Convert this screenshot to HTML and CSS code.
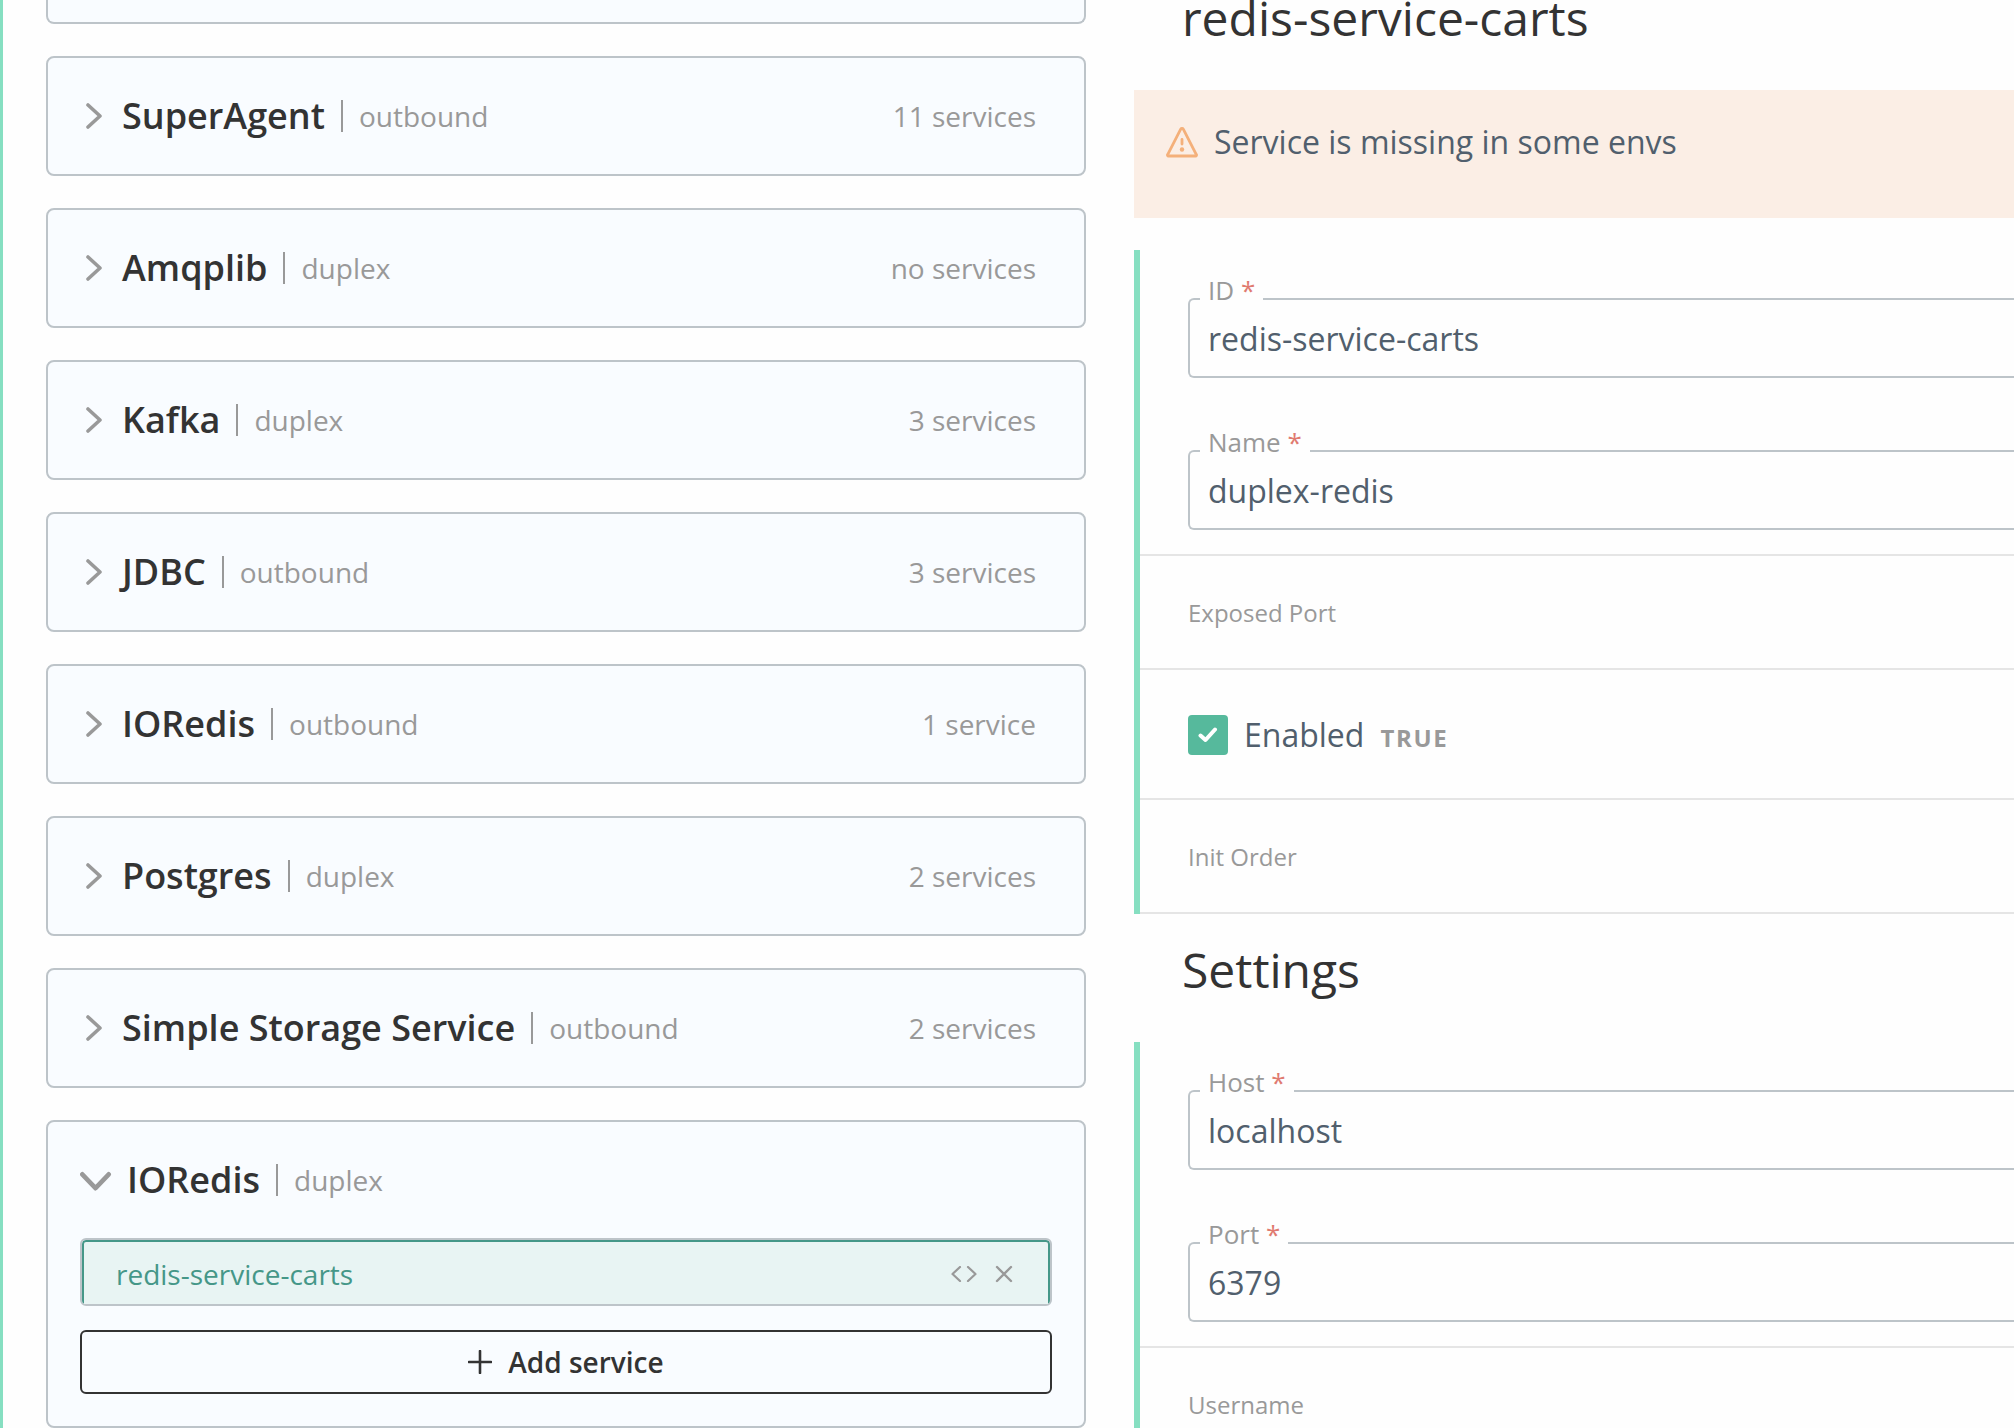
FILE: index.html
```html
<!DOCTYPE html>
<html lang="en">
<head>
<meta charset="utf-8">
<title>Services</title>
<link rel="stylesheet" href="styles.css">
</head>
<body>
<main class="page">
  <section class="list">
    <article class="card card-cut"></article>
    <article class="card"><svg class="chev" viewBox="0 0 16 26"><path d="M2 2l12 11L2 24"/></svg><h3>SuperAgent</h3><span class="kind">outbound</span><span class="count">11 services</span></article>
    <article class="card"><svg class="chev" viewBox="0 0 16 26"><path d="M2 2l12 11L2 24"/></svg><h3>Amqplib</h3><span class="kind">duplex</span><span class="count">no services</span></article>
    <article class="card"><svg class="chev" viewBox="0 0 16 26"><path d="M2 2l12 11L2 24"/></svg><h3>Kafka</h3><span class="kind">duplex</span><span class="count">3 services</span></article>
    <article class="card"><svg class="chev" viewBox="0 0 16 26"><path d="M2 2l12 11L2 24"/></svg><h3>JDBC</h3><span class="kind">outbound</span><span class="count">3 services</span></article>
    <article class="card"><svg class="chev" viewBox="0 0 16 26"><path d="M2 2l12 11L2 24"/></svg><h3>IORedis</h3><span class="kind">outbound</span><span class="count">1 service</span></article>
    <article class="card"><svg class="chev" viewBox="0 0 16 26"><path d="M2 2l12 11L2 24"/></svg><h3>Postgres</h3><span class="kind">duplex</span><span class="count">2 services</span></article>
    <article class="card"><svg class="chev" viewBox="0 0 16 26"><path d="M2 2l12 11L2 24"/></svg><h3>Simple Storage Service</h3><span class="kind">outbound</span><span class="count">2 services</span></article>
    <article class="card card-open">
      <header class="card-head"><svg class="chev-down" viewBox="0 0 32 22"><path d="M2.300 5.300L15.500 19.200 28.700 5.300"/></svg><h3>IORedis</h3><span class="kind">duplex</span></header>
      <div class="service">
        <div class="service-row">
          <span class="service-name">redis-service-carts</span>
          <svg class="code" viewBox="0 0 26 16"><path d="M9 1L1.500 8 9 15M17 1l7.500 7L17 15"/></svg>
          <svg class="close" viewBox="0 0 18 18"><path d="M2 2l14 14M16 2L2 16"/></svg>
        </div>
      </div>
      <button class="add"><svg class="plus" viewBox="0 0 24 24"><path d="M12 1v22M1 12h22"/></svg>Add service</button>
    </article>
  </section>
  <section class="detail">
    <h1>redis-service-carts</h1>
    <div class="alert"><svg class="warn" viewBox="0 0 32 32"><path d="M14.700 3.200a1.500 1.500 0 0 1 2.600 0L30.200 28.300a1 1 0 0 1-.9 1.700H2.700a1 1 0 0 1-.9-1.700z"/><path d="M16 13.500v4.500"/><circle cx="16" cy="23.500" r="2.200"/></svg><span>Service is missing in some envs</span></div>
    <div class="group">
      <div class="fields">
        <div class="field"><label>ID <i>*</i></label><span>redis-service-carts</span></div>
        <div class="field"><label>Name <i>*</i></label><span>duplex-redis</span></div>
      </div>
      <div class="row">Exposed Port</div>
      <div class="row row-check"><span class="check"><svg viewBox="0 0 20 16"><path d="M2.500 8.500l5 4.500L17 2.500"/></svg></span><span class="check-label">Enabled</span><b>TRUE</b></div>
      <div class="row">Init Order</div>
    </div>
    <h2>Settings</h2>
    <div class="group">
      <div class="fields">
        <div class="field"><label>Host <i>*</i></label><span>localhost</span></div>
        <div class="field"><label>Port <i>*</i></label><span>6379</span></div>
      </div>
      <div class="row">Username</div>
    </div>
  </section>
</main>
</body>
</html>
```
FILE: styles.css
```css
* { box-sizing: border-box; }
body { margin: 0; background: #fefefe; color: #333; font-family: "Open Sans", sans-serif; }
h1, h2, h3 { margin: 0; }
svg { display: block; flex: none; fill: none; stroke: #999; stroke-linecap: round; stroke-linejoin: round; }
.page { display: flex; height: 1428px; overflow: hidden; border-left: 3px solid #86dfc1; }

/* Plugin list */
.list { display: flex; flex-direction: column; gap: 32px; width: 1040px; margin-left: 43px; flex: none; }
.card { display: flex; align-items: center; flex: none; height: 120px; padding: 0 48px 0 38px; border: 2px solid #bdc4c9; border-radius: 8px; background: #f9fcff; }
.card-cut { height: 24px; border-top: 0; border-radius: 0 0 8px 8px; }
.chev { width: 16px; height: 26px; stroke-width: 3.6; margin-right: 20px; }
.card h3 { font-size: 36px; font-weight: 600; line-height: 48px; white-space: nowrap; }
.kind { display: flex; align-items: center; height: 32px; margin-left: 16px; padding-left: 16px; border-left: 2px solid #999; color: #999; font-size: 28px; line-height: 32px; }
.count { margin-left: auto; color: #999; font-size: 28px; line-height: 32px; }
.card-open { display: block; height: 308px; padding: 0 32px; }
.card-head { display: flex; align-items: center; height: 116px; }
.chev-down { width: 32px; height: 22px; stroke-width: 4.6; margin-right: 15px; }
.service { height: 68px; border: 2px solid #bdc4c9; border-radius: 6px; overflow: hidden; }
.service-row { display: flex; align-items: center; height: 68px; padding: 0 35px 0 32px; border: 2px solid #459788; border-radius: 4px; background: #e8f4f3; }
.service-name { flex: 1; color: #459788; font-size: 28px; line-height: 38px; }
.code { width: 26px; height: 16px; stroke-width: 2.2; margin-right: 18px; }
.close { width: 18px; height: 18px; stroke-width: 2.4; }
.add { display: flex; align-items: center; justify-content: center; width: 100%; height: 64px; margin-top: 24px; padding: 0; border: 2px solid #333; border-radius: 6px; background: transparent; color: #333; font: 600 28px/38px "Open Sans", sans-serif; }
.plus { width: 24px; height: 24px; margin-right: 16px; stroke: #333; stroke-width: 2.6; }

/* Service form */
.detail { flex: 1; min-width: 0; margin-left: 48px; }
h1, h2 { padding-left: 48px; font-size: 48px; font-weight: 400; line-height: 65px; white-space: nowrap; }
h1 { margin-top: -15px; }
h2 { margin: 23px 0 40px; }
.alert { display: flex; height: 128px; margin: 40px 0 32px; padding: 32px; background: #fbeee5; color: #515f6d; font-size: 32px; line-height: 40px; }
.warn { width: 32px; height: 32px; margin: 4px 16px 0 0; stroke: #f4b07a; stroke-width: 2.8; }
.warn circle { fill: #f4b07a; stroke: none; }
.group { border-left: 6px solid #86dfc1; }
.fields { display: flex; flex-direction: column; gap: 72px; padding: 48px 0 24px 48px; }
.field { position: relative; height: 80px; padding: 17px 18px; border: 2px solid #bdc4c9; border-right: 0; border-radius: 6px 0 0 6px; color: #515f6d; font-size: 32px; line-height: 44px; }
.field span { display: block; }
.field label { position: absolute; left: 10px; top: -27px; padding: 0 8px; background: #fefefe; color: #999; font-size: 26px; line-height: 34px; }
.field i { color: #e07a70; font-style: normal; }
.row { display: flex; align-items: center; height: 114px; padding: 2px 0 0 48px; border-top: 2px solid #e5e5e5; color: #999; font-size: 24px; line-height: 32px; }
.row-check { height: 130px; }
.row:last-child { height: 116px; border-bottom: 2px solid #e5e5e5; }
.check { display: flex; align-items: center; justify-content: center; width: 40px; height: 40px; border-radius: 4px; background: #56b99c; }
.check svg { width: 20px; height: 16px; stroke: #fff; stroke-width: 4; }
.check-label { margin-left: 16px; color: #515f6d; font-size: 32px; }
.row b { margin: 6px 0 0 16px; letter-spacing: 1.7px; }
```
